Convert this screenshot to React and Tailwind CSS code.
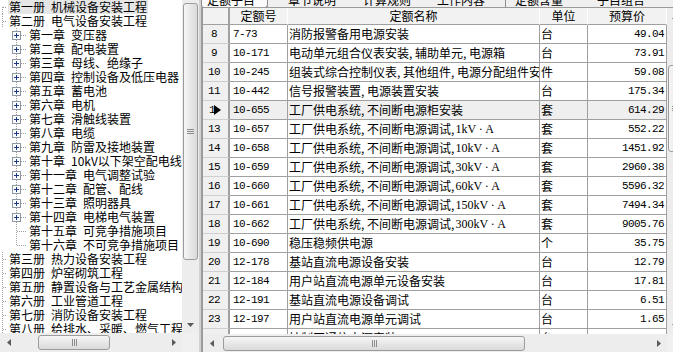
import React from 'react';

const cjk = "font-['Noto_Sans_CJK_SC','Noto_Sans',sans-serif]";
const mono = "font-['Liberation_Mono',monospace] text-[11px] tracking-[-0.6px]";

const tree = [
  { t: '第一册', n: '机械设备安装工程', lv: 0, sel: true, first: true },
  { t: '第二册', n: '电气设备安装工程', lv: 0 },
  { t: '第一章', n: '变压器', lv: 1, plus: true },
  { t: '第二章', n: '配电装置', lv: 1, plus: true },
  { t: '第三章', n: '母线、绝缘子', lv: 1, plus: true },
  { t: '第四章', n: '控制设备及低压电器', lv: 1, plus: true },
  { t: '第五章', n: '蓄电池', lv: 1, plus: true },
  { t: '第六章', n: '电机', lv: 1, plus: true },
  { t: '第七章', n: '滑触线装置', lv: 1, plus: true },
  { t: '第八章', n: '电缆', lv: 1, plus: true },
  { t: '第九章', n: '防雷及接地装置', lv: 1, plus: true },
  { t: '第十章', n: '10kV以下架空配电线路', lv: 1, plus: true },
  { t: '第十一章', n: '电气调整试验', lv: 1, plus: true },
  { t: '第十二章', n: '配管、配线', lv: 1, plus: true },
  { t: '第十三章', n: '照明器具', lv: 1, plus: true },
  { t: '第十四章', n: '电梯电气装置', lv: 1, plus: true },
  { t: '第十五章', n: '可竞争措施项目', lv: 1 },
  { t: '第十六章', n: '不可竞争措施项目', lv: 1, last: true },
  { t: '第三册', n: '热力设备安装工程', lv: 0 },
  { t: '第四册', n: '炉窑砌筑工程', lv: 0 },
  { t: '第五册', n: '静置设备与工艺金属结构制作安装工程', lv: 0 },
  { t: '第六册', n: '工业管道工程', lv: 0 },
  { t: '第七册', n: '消防设备安装工程', lv: 0 },
  { t: '第八册', n: '给排水、采暖、燃气工程', lv: 0 },
];

const kva = '工厂供电系统, 不间断电源调试, ';

const rows = [
  { no: '8', code: '7-73', name: '消防报警备用电源安装', unit: '台', price: '49.04' },
  { no: '9', code: '10-171', name: '电动单元组合仪表安装, 辅助单元, 电源箱', unit: '台', price: '73.91' },
  { no: '10', code: '10-245', name: '组装式综合控制仪表, 其他组件, 电源分配组件安装', unit: '件', price: '59.08' },
  { no: '11', code: '10-442', name: '信号报警装置, 电源装置安装', unit: '台', price: '175.34' },
  { no: '12', code: '10-655', name: '工厂供电系统, 不间断电源柜安装', unit: '套', price: '614.29', sel: true },
  { no: '13', code: '10-657', name: kva, kv: '1kV · A', unit: '套', price: '552.22' },
  { no: '14', code: '10-658', name: kva, kv: '10kV · A', unit: '套', price: '1451.92' },
  { no: '15', code: '10-659', name: kva, kv: '30kV · A', unit: '套', price: '2960.38' },
  { no: '16', code: '10-660', name: kva, kv: '60kV · A', unit: '套', price: '5596.32' },
  { no: '17', code: '10-661', name: kva, kv: '150kV · A', unit: '套', price: '7494.34' },
  { no: '18', code: '10-662', name: kva, kv: '300kV · A', unit: '套', price: '9005.76' },
  { no: '19', code: '10-690', name: '稳压稳频供电源', unit: '个', price: '35.75' },
  { no: '20', code: '12-178', name: '基站直流电源设备安装', unit: '台', price: '12.79' },
  { no: '21', code: '12-184', name: '用户站直流电源单元设备安装', unit: '台', price: '17.81' },
  { no: '22', code: '12-191', name: '基站直流电源设备调试', unit: '台', price: '6.51' },
  { no: '23', code: '12-197', name: '用户站直流电源单元调试', unit: '台', price: '1.65' },
  { no: '24', code: '12-170', name: '控制区通信电源安装', unit: '台', price: '11.21' },
];

const Arrow = ({ dir }) => {
  const pts = {
    up: '0,4 3.5,0 7,4',
    down: '0,0 7,0 3.5,4',
    left: '4,0 4,7 0,3.5',
    right: '0,0 0,7 4,3.5',
  }[dir];
  const vert = dir === 'up' || dir === 'down';
  return (
    <svg width={vert ? 7 : 4} height={vert ? 4 : 7} viewBox={vert ? '0 0 7 4' : '0 0 4 7'}>
      <polygon points={pts} fill="#5a5a5a" />
    </svg>
  );
};

const VGrip = () => (
  <div className="flex flex-col gap-[1px]">
    <div className="w-[7px] h-px bg-[#8c8c8c]" />
    <div className="w-[7px] h-px bg-[#8c8c8c]" />
    <div className="w-[7px] h-px bg-[#8c8c8c]" />
  </div>
);

const HGrip = () => (
  <div className="flex gap-[1px]">
    <div className="h-[7px] w-px bg-[#8c8c8c]" />
    <div className="h-[7px] w-px bg-[#8c8c8c]" />
    <div className="h-[7px] w-px bg-[#8c8c8c]" />
  </div>
);

const TreeLines = ({ item }) => {
  if (item.lv === 0) {
    return (
      <svg width="8" height="14" className="shrink-0">
        <line x1="2.5" y1={item.first ? 7 : 0} x2="2.5" y2="14" stroke="#a0a0a0" strokeDasharray="1 1" />
        <line x1="3" y1="7.5" x2="7" y2="7.5" stroke="#a0a0a0" strokeDasharray="1 1" />
      </svg>
    );
  }
  return (
    <svg width="28" height="14" className="shrink-0">
      <line x1="16.5" y1="0" x2="16.5" y2={item.last ? 7 : 14} stroke="#a0a0a0" strokeDasharray="1 1" />
      <line x1="17" y1="7.5" x2="26" y2="7.5" stroke="#a0a0a0" strokeDasharray="1 1" />
      {item.plus && (
        <g>
          <rect x="12.5" y="3.5" width="8" height="8" fill="#fdfdfd" stroke="#8e99a6" />
          <line x1="14" y1="7.5" x2="19" y2="7.5" stroke="#1d3a8a" />
          <line x1="16.5" y1="5" x2="16.5" y2="10" stroke="#1d3a8a" />
        </g>
      )}
    </svg>
  );
};

const TreePanel = () => (
  <div className="w-[199px] shrink-0 flex flex-col">
    <div className="flex h-[333px]">
      <div className="w-[182px] shrink-0 bg-white overflow-hidden">
        {tree.map((item) => (
          <div key={item.t + item.n} className="flex h-[14px] items-center whitespace-nowrap leading-[14px]">
            <TreeLines item={item} />
            <span className={`flex px-px ${item.sel ? 'bg-[#e6e6e6]' : ''}`}>
              <span>{item.t}</span>
              <span className="ml-[6px]">{item.n}</span>
            </span>
          </div>
        ))}
      </div>
      <div className="w-[17px] shrink-0 bg-[#ededed] flex flex-col">
        <div className="mt-[3px] mx-px h-[257px] rounded-[3px] border border-[#9b9b9b] bg-linear-to-r from-[#f6f6f6] to-[#dadada] flex items-center justify-center">
          <VGrip />
        </div>
        <div className="flex-1" />
        <div className="h-[17px] flex items-center justify-center">
          <Arrow dir="down" />
        </div>
      </div>
    </div>
    <div className="flex h-[19px]">
      <div className="w-[182px] shrink-0 bg-[#ededed] flex items-center">
        <div className="w-[17px] flex justify-center">
          <Arrow dir="left" />
        </div>
        <div className="ml-[21px] w-[72px] h-[15px] rounded-[3px] border border-[#9b9b9b] bg-linear-to-b from-[#f6f6f6] to-[#dadada] flex items-center justify-center">
          <HGrip />
        </div>
        <div className="flex-1" />
        <div className="w-[17px] flex justify-center">
          <Arrow dir="right" />
        </div>
      </div>
      <div className="w-[17px] shrink-0 bg-[#f0f0f0]" />
    </div>
  </div>
);

const Tabs = () => (
  <div className="h-[7px] shrink-0 overflow-hidden">
    <div className="-mt-[7px] h-[14px] flex items-start whitespace-nowrap leading-[14px]">
      <div className="w-[67px] h-[15px] border-x border-b border-[#8c8c8c] rounded-b-[3px] bg-[#fbfbfb] pl-[5px]">定额子目</div>
      <div className="ml-[20px]">章节说明</div>
      <div className="ml-[27px]">计算规则</div>
      <div className="ml-[26px]">工作内容</div>
      <div className="ml-[20px] mt-[6px] w-px h-[8px] bg-[#8c8c8c]" />
      <div className="ml-[9px]">定额含量</div>
      <div className="ml-[34px]">子目组合</div>
    </div>
  </div>
);

const cellB = 'border-r border-b border-[#a0a0a0]';

const DataRow = ({ r }) => (
  <div className={`flex h-[19px] shrink-0 leading-[14px] ${r.sel ? 'bg-[#efefef]' : 'bg-white'}`}>
    <div className={`relative w-[27px] shrink-0 border-r-2 border-b border-r-[#a0a0a0] border-b-[#cfcfcf] bg-[#f0f0f0] flex items-center justify-center pr-[3px] ${mono}`}>
      {r.sel ? (
        <>
          <span className="-ml-[4px]">1</span>
          <svg width="7" height="10" className="absolute left-[11px] top-[4px]">
            <polygon points="0,0 7,5 0,10" fill="#000" />
          </svg>
        </>
      ) : (
        r.no
      )}
    </div>
    <div className={`w-[58px] shrink-0 ${cellB} pl-[3px] flex items-center ${mono}`}>{r.code}</div>
    <div className={`w-[252px] shrink-0 ${cellB} pl-[1px] flex items-center overflow-hidden whitespace-nowrap`}>
      <span className="min-w-0 overflow-hidden">{r.name}</span>
      {r.kv && <span className="ml-[1px] font-['Liberation_Serif',serif] text-[12px]">{r.kv}</span>}
    </div>
    <div className={`w-[48px] shrink-0 ${cellB} pl-[1px] flex items-center`}>{r.unit}</div>
    <div className={`w-[79px] shrink-0 ${cellB} pr-[2px] flex items-center justify-end ${mono}`}>{r.price}</div>
  </div>
);

const GridPanel = () => (
  <div className="w-[483px] shrink-0 flex flex-col">
    <Tabs />
    <div className="flex-1 flex flex-col min-h-0 border-l-2 border-t border-[#9a9a9a] bg-white">
      <div className="flex flex-1 min-h-0">
        <div className="w-[464px] shrink-0 overflow-hidden flex flex-col">
          <div className="flex h-[17px] shrink-0 bg-[#f2f2f2] leading-[16px]">
            <div className="w-[27px] shrink-0 border-r-2 border-b border-[#a0a0a0]" />
            <div className="w-[58px] shrink-0 border-r border-r-white border-b border-b-[#a0a0a0] text-center">定额号</div>
            <div className="w-[252px] shrink-0 border-r border-r-white border-b border-b-[#a0a0a0] text-center">定额名称</div>
            <div className="w-[48px] shrink-0 border-r border-r-white border-b border-b-[#a0a0a0] text-center">单位</div>
            <div className="w-[79px] shrink-0 border-r border-r-white border-b border-b-[#a0a0a0] text-center">预算价</div>
          </div>
          {rows.map((r) => (
            <DataRow key={r.no} r={r} />
          ))}
        </div>
        <div className="w-[17px] shrink-0 bg-[#ededed] flex flex-col">
          <div className="h-[17px] flex items-center justify-center">
            <Arrow dir="up" />
          </div>
          <div className="mt-[40px] mx-px h-[87px] rounded-[3px] border border-[#9b9b9b] bg-linear-to-r from-[#f6f6f6] to-[#dadada] flex items-center justify-center">
            <VGrip />
          </div>
          <div className="flex-1" />
          <div className="h-[17px] flex items-center justify-center">
            <Arrow dir="down" />
          </div>
        </div>
      </div>
      <div className="flex h-[18px] shrink-0">
        <div className="w-[464px] shrink-0 bg-[#ededed] flex items-center">
          <div className="w-[17px] flex justify-center">
            <Arrow dir="left" />
          </div>
          <div className="ml-[3px] w-[302px] h-[15px] rounded-[3px] border border-[#9b9b9b] bg-linear-to-b from-[#f6f6f6] to-[#dadada] flex items-center justify-center">
            <HGrip />
          </div>
          <div className="flex-1" />
          <div className="w-[17px] flex justify-center">
            <Arrow dir="right" />
          </div>
        </div>
        <div className="w-[17px] shrink-0 bg-[#f0f0f0]" />
      </div>
    </div>
  </div>
);

export default function App() {
  return (
    <div className={`w-[673px] h-[352px] overflow-hidden flex bg-[#f0f0f0] text-[12px] text-black ${cjk}`}>
      <TreePanel />
      <div className="w-[2px] shrink-0 bg-[#d2d2d2]" />
      <GridPanel />
    </div>
  );
}
